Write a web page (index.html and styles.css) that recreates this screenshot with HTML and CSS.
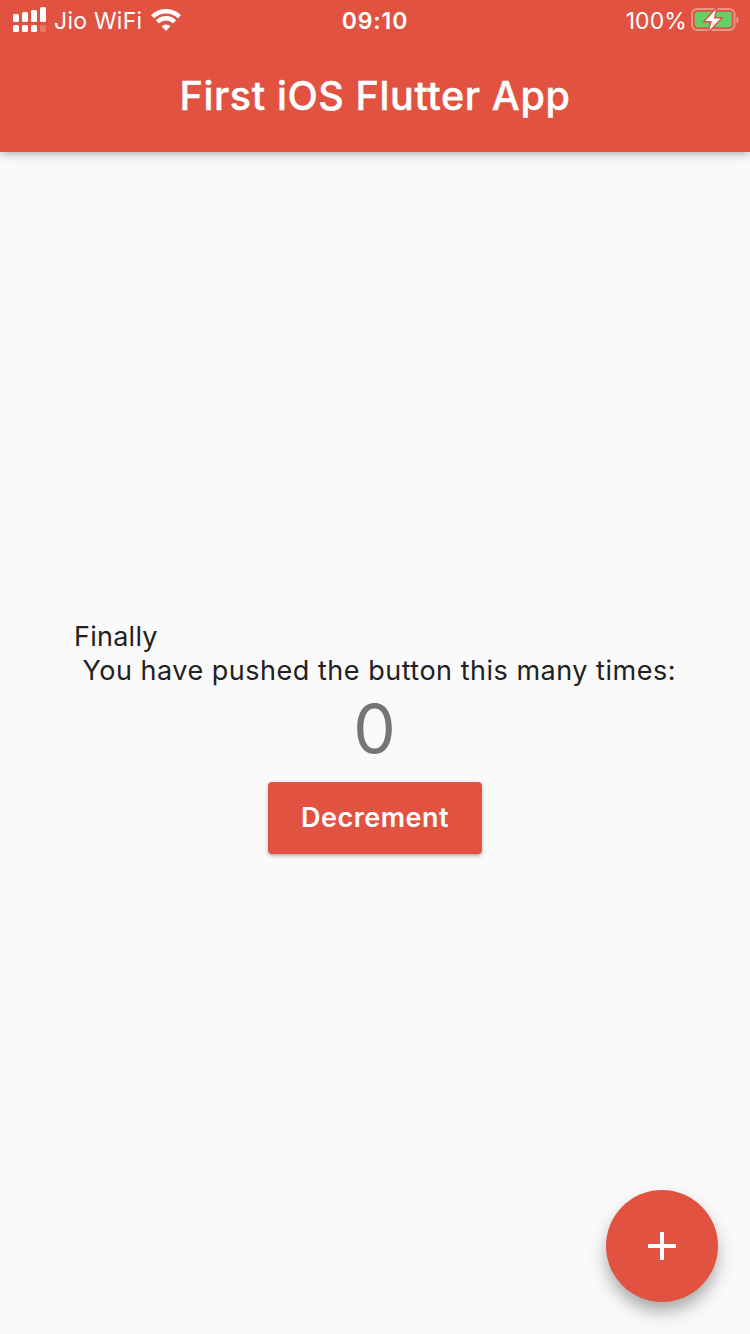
FILE: index.html
```html
<!DOCTYPE html>
<html lang="en">
<head>
<meta charset="utf-8">
<title>First iOS Flutter App</title>
<link rel="stylesheet" href="styles.css">
</head>
<body>
<div class="screen">
  <header class="app-bar">
    <div class="status-bar">
      <div class="status-left">
        <svg class="signal" width="34" height="26" viewBox="0 0 34 26" fill="#fff">
          <rect x="0" y="7" width="6" height="8" rx="1.6"/>
          <rect x="9" y="5" width="6" height="10" rx="1.6"/>
          <rect x="18" y="3" width="6" height="12" rx="1.6"/>
          <rect x="27" y="0" width="6" height="15" rx="1.6"/>
          <rect x="0" y="18" width="6" height="7" rx="1.6"/>
          <rect x="9" y="18" width="6" height="7" rx="1.6"/>
          <rect x="18" y="18" width="6" height="7" rx="1.6"/>
          <rect x="27" y="18" width="6" height="7" rx="1.6" opacity=".22"/>
        </svg>
        <span class="carrier">Jio WiFi</span>
        <svg class="wifi" width="30" height="22" viewBox="0 0 30 22">
          <path d="M1.6 7.8a18.8 18.8 0 0 1 26.8 0M6.4 12.9a12 12 0 0 1 17.2 0" fill="none" stroke="#fff" stroke-width="4.4"/>
          <path d="M10.6 17.2a6.6 6.6 0 0 1 8.8 0L15 22Z" fill="#fff"/>
        </svg>
      </div>
      <span class="clock">09:10</span>
      <div class="status-right">
        <span class="percent">100%</span>
        <svg class="battery" width="48" height="24" viewBox="0 0 48 24">
          <rect x="1" y="1" width="42.5" height="21" rx="5.2" fill="none" stroke="#fff" stroke-opacity=".38" stroke-width="2"/>
          <path d="M45.5 8.2q2 1 2 3.5t-2 3.5z" fill="#fff" fill-opacity=".45"/>
          <rect x="3.8" y="3.8" width="37" height="15.4" rx="3" fill="#63cf65"/>
          <path d="M24.8 1.5 14.3 13h6.5L18.3 22.3 29.6 10.4h-6.8Z" fill="#fff" stroke="#e15241" stroke-width="2.8" paint-order="stroke"/>
        </svg>
      </div>
    </div>
    <h1 class="title">First iOS Flutter App</h1>
  </header>
  <main class="content">
    <p class="message"><span class="line first">Finally</span><span class="line second">You have pushed the button this many times:</span></p>
    <div class="count">0</div>
    <button class="decrement">Decrement</button>
  </main>
  <button class="fab" aria-label="Increment">
    <svg width="28" height="28" viewBox="0 0 28 28"><path d="M12 0h4v12h12v4H16v12h-4V16H0v-4h12z" fill="#fff"/></svg>
  </button>
</div>
</body>
</html>
```
FILE: styles.css
```css
* { box-sizing: border-box; }
body { margin: 0; font-family: Inter, "Liberation Sans", sans-serif; }
button { border: 0; padding: 0; font: inherit; color: #fff; background: #e15241; }
.screen {
  position: relative;
  width: 750px;
  height: 1334px;
  display: flex;
  flex-direction: column;
  background: #fafafa;
  overflow: hidden;
}
.app-bar {
  height: 152px;
  flex: none;
  background: #e15241;
  color: #fff;
  box-shadow: 0 3px 7px -1px rgba(0,0,0,.18), 0 3px 12px rgba(0,0,0,.12);
}
.status-bar {
  height: 40px;
  display: grid;
  grid-template-columns: 1fr auto 1fr;
  align-items: center;
  padding: 0 11px 0 13px;
  line-height: 38px;
  white-space: nowrap;
}
.status-left, .status-right { display: flex; align-items: center; }
.status-right { justify-content: flex-end; }
.carrier { width: 90px; margin-left: 7px; padding-top: 2px; font-size: 23px; font-weight: 400; letter-spacing: .25px; }
.wifi { margin-left: 7px; }
.clock { padding-top: 2px; font-size: 23px; font-weight: 600; letter-spacing: .9px; margin-left: -2px; }
.percent { padding-top: 2px; font-size: 23px; font-weight: 400; letter-spacing: .1px; }
.battery { margin-left: 4px; }
.title {
  margin: 0;
  height: 112px;
  text-align: center;
  font-size: 39.5px;
  line-height: 112px;
  font-weight: 500;
  -webkit-text-stroke: .4px #fff;
  letter-spacing: .6px;
}
.content {
  flex: 1;
  display: flex;
  flex-direction: column;
  align-items: center;
  padding-top: 468px;
}
.message { margin: 0; width: 602px; color: #212121; font-size: 27px; line-height: 34px; letter-spacing: .51px; white-space: nowrap; }
.line { display: block; }
.first { letter-spacing: .25px; }
.second { padding-left: 8.5px; }
.count { height: 80px; margin-left: -1px; font-size: 67.5px; line-height: 82px; color: #757575; }
.decrement {
  margin-top: 14px;
  width: 214px;
  height: 72px;
  padding-bottom: 2px;
  border-radius: 4px;
  font-size: 27px;
  font-weight: 600;
  letter-spacing: .5px;
  box-shadow: 0 3px 3px -2px rgba(0,0,0,.16), 0 2px 4px rgba(0,0,0,.22);
}
.fab {
  position: absolute;
  right: 32px;
  bottom: 32px;
  width: 112px;
  height: 112px;
  border-radius: 50%;
  display: flex;
  align-items: center;
  justify-content: center;
  box-shadow: 0 10px 14px -2px rgba(0,0,0,.2), 0 10px 22px rgba(0,0,0,.16);
}
```
